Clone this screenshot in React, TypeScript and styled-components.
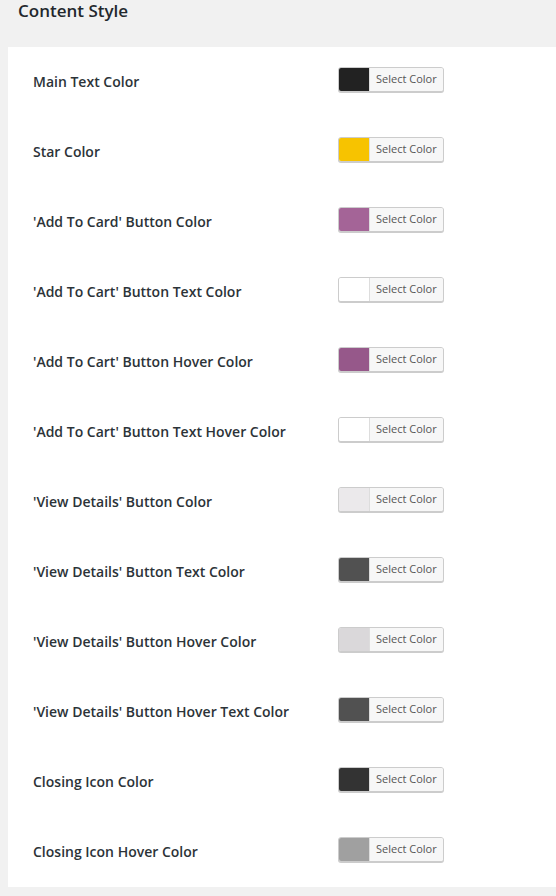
import React from "react";
import styled, { createGlobalStyle } from "styled-components";

const Global = createGlobalStyle`
  html, body { margin: 0; padding: 0; background: #f1f1f1; }
  body { font-family: "Open Sans", "Noto Sans", sans-serif; color: #23282d; }
`;

const Page = styled.div`
  padding-left: 8px;
  padding-top: 1px;
  min-height: 896px;
  box-sizing: border-box;
`;

const Title = styled.h2`
  margin: 0 0 26px 0;
  padding-left: 10px;
  font-size: 17px;
  line-height: 20px;
  font-weight: 600;
  color: #23282d;
`;

const Panel = styled.div`
  background: #ffffff;
  padding-left: 25px;
`;

const Row = styled.div`
  display: flex;
  align-items: flex-start;
  height: 70px;
`;

const Label = styled.div`
  width: 305px;
  padding-top: 25px;
  font-size: 14px;
  line-height: 20px;
  font-weight: 600;
  color: #2c3338;
`;

const ColorButton = styled.button`
  margin-top: 20px;
  display: flex;
  align-items: stretch;
  padding: 0;
  border: 1px solid #cccccc;
  border-radius: 3px;
  box-shadow: 0 1px 0 #cccccc;
  overflow: hidden;
  background: #f7f7f7;
  cursor: pointer;
  height: 25px;
  box-sizing: border-box;
`;

const Swatch = styled.span<{ $color: string }>`
  width: 30px;
  background: ${(p) => p.$color};
`;

const ButtonText = styled.span`
  display: block;
  padding: 0 6px;
  border-left: 1px solid #dddddd;
  background: #f7f7f7;
  font-family: "Open Sans", "Noto Sans", sans-serif;
  font-size: 11px;
  line-height: 22px;
  color: #555555;
`;

const rows: { label: string; color: string }[] = [
  { label: "Main Text Color", color: "#222222" },
  { label: "Star Color", color: "#f7c300" },
  { label: "'Add To Card' Button Color", color: "#a46497" },
  { label: "'Add To Cart' Button Text Color", color: "#ffffff" },
  { label: "'Add To Cart' Button Hover Color", color: "#96588a" },
  { label: "'Add To Cart' Button Text Hover Color", color: "#ffffff" },
  { label: "'View Details' Button Color", color: "#ebe9eb" },
  { label: "'View Details' Button Text Color", color: "#515151" },
  { label: "'View Details' Button Hover Color", color: "#dad8da" },
  { label: "'View Details' Button Hover Text Color", color: "#515151" },
  { label: "Closing Icon Color", color: "#333333" },
  { label: "Closing Icon Hover Color", color: "#a0a0a0" },
];

export default function App() {
  return (
    <>
      <Global />
      <Page>
        <Title>Content Style</Title>
        <Panel>
          {rows.map((r) => (
            <Row key={r.label}>
              <Label>{r.label}</Label>
              <ColorButton type="button">
                <Swatch $color={r.color} />
                <ButtonText>Select Color</ButtonText>
              </ColorButton>
            </Row>
          ))}
        </Panel>
      </Page>
    </>
  );
}
